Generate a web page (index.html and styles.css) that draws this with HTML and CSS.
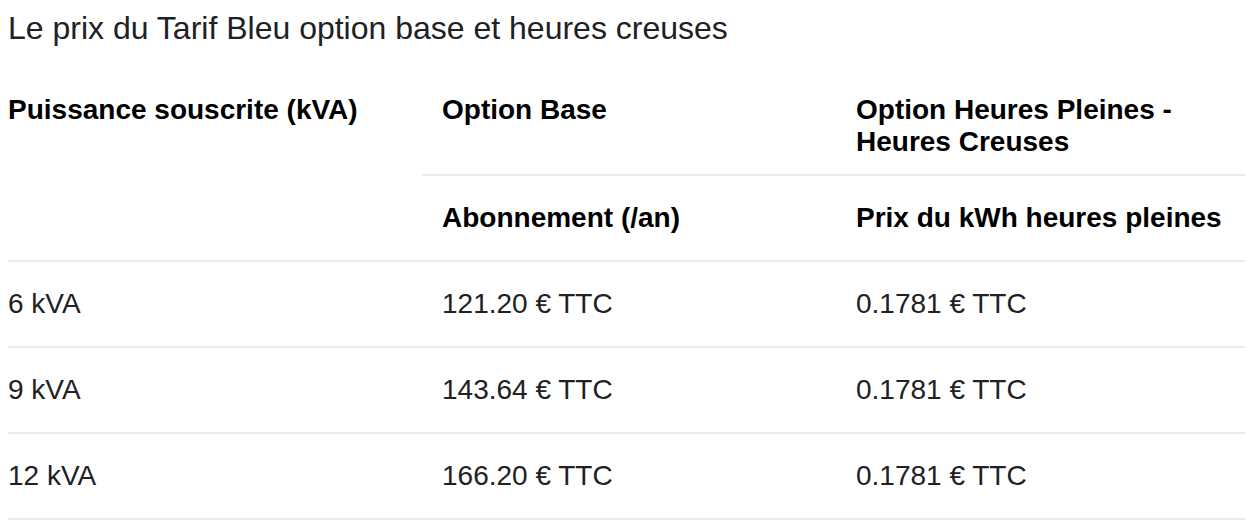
FILE: index.html
```html
<!DOCTYPE html>
<html lang="fr">
<head>
<meta charset="utf-8">
<title>Tarif Bleu</title>
<link rel="stylesheet" href="styles.css">
</head>
<body>
<h2 class="title">Le prix du Tarif Bleu option base et heures creuses</h2>
<table class="tarifs">
  <thead>
    <tr class="head-top">
      <th rowspan="2" class="first">Puissance souscrite (kVA)</th>
      <th>Option Base</th>
      <th>Option Heures Pleines - Heures Creuses</th>
    </tr>
    <tr class="head-sub">
      <th>Abonnement (/an)</th>
      <th>Prix du kWh heures pleines</th>
    </tr>
  </thead>
  <tbody>
    <tr><td class="first">6 kVA</td><td>121.20 € TTC</td><td>0.1781 € TTC</td></tr>
    <tr><td class="first">9 kVA</td><td>143.64 € TTC</td><td>0.1781 € TTC</td></tr>
    <tr><td class="first">12 kVA</td><td>166.20 € TTC</td><td>0.1781 € TTC</td></tr>
  </tbody>
</table>
</body>
</html>
```

FILE: styles.css
```css
html, body {
  background: #ffffff;
}
body {
  margin: 8px;
  font-family: "Liberation Sans", Arial, Helvetica, sans-serif;
  color: #202124;
}
.title {
  margin: 0 0 20px 0;
  font-size: 32px;
  line-height: 40px;
  font-weight: normal;
  color: #202124;
}
.tarifs {
  width: 1242px;
  table-layout: fixed;
  border-collapse: collapse;
  font-size: 28px;
  line-height: 32px;
}
.tarifs th {
  text-align: left;
  vertical-align: top;
  font-weight: bold;
  color: #000000;
  padding: 26px 20px 26px 20px;
  border-bottom: 2px solid #ebebeb;
}
.tarifs .head-top th {
  padding-bottom: 16px;
}
.tarifs .head-top th.first {
  padding-bottom: 26px;
}
.tarifs td {
  text-align: left;
  vertical-align: top;
  padding: 26px 20px 26px 20px;
  border-bottom: 2px solid #ebebeb;
  color: #202124;
}
.tarifs .first {
  padding-left: 0;
}
```
